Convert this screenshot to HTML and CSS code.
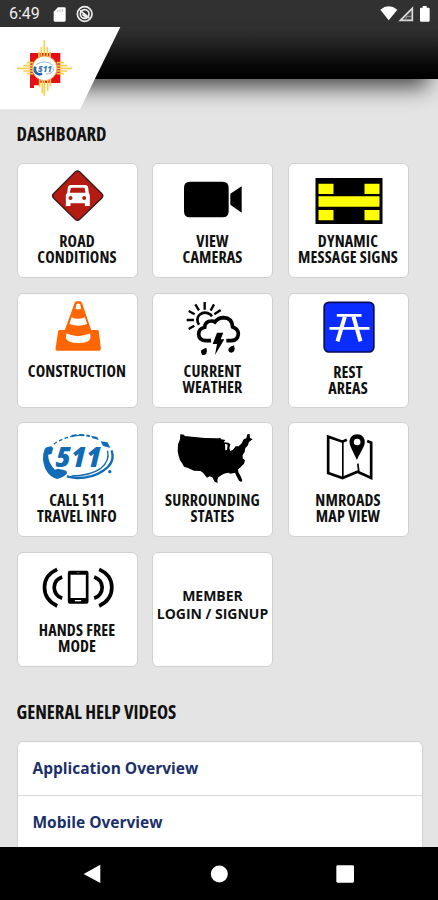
FILE: index.html
```html
<!DOCTYPE html>
<html lang="en">
<head>
  <meta charset="UTF-8">
  <meta name="viewport" content="width=device-width, initial-scale=1.0">
  <title>NMRoads</title>
  <link rel="stylesheet" href="styles.css">
</head>
<body>
  <div class="status-bar">
    <span class="time">6:49</span>
    <svg class="status-left" viewBox="150 0 140 78">
      <path d="M174 22h19q4 0 4 4v35q0 4-4 4h-28q-4 0-4-4V35z" fill="#fff"/>
      <path d="M173 31v6M180 28v8M187 27v9" stroke="#999" stroke-width="2"/>
      <circle cx="254" cy="42" r="22" fill="none" stroke="#eee" stroke-width="5"/>
      <circle cx="254" cy="42" r="13" fill="none" stroke="#eee" stroke-width="5"/>
      <path d="M240 31l28 23M247 43l12 10" stroke="#eee" stroke-width="5"/>
    </svg>
    <svg class="status-right" viewBox="1134 0 180 78">
      <path d="M1141 29q25-20 51 0l-26 32z" fill="#fff"/>
      <path d="M1201 61l36-36v36z" fill="#444" stroke="#ddd" stroke-width="5"/>
      <path d="M1218 61V49h17" fill="none" stroke="#999" stroke-width="3"/>
      <path d="M1268 18h12v5h6q3 0 3 3v36q0 3-3 3h-23q-3 0-3-3V26q0-3 3-3h5z" fill="#fff"/>
    </svg>
  </div>

  <header class="header">
    <div class="header-bar"></div>
    <svg class="logo" viewBox="0 78 363 252">
      <path d="M0 81h361L240 328H0z" fill="#fff"/>
      <path d="M90 159h91v90h-62v7h-17v8H90z" fill="#e31015"/>
      <g stroke="#f8cf4f" stroke-width="5">
        <path d="M133 121v166M51 205h165"/>
        <path d="M124 141v28M142 141v28M117 155v20M150 155v20"/>
        <path d="M127 240v40M143 240v32M119 238v24M151 238v20"/>
        <path d="M70 197h30M70 213h30M80 188h20M80 221h20"/>
        <path d="M170 197h32M170 213h32M170 188h22M170 221h22"/>
      </g>
      <circle cx="134" cy="205" r="37" fill="#fff" stroke="#f5a54a" stroke-width="3"/>
      <path d="M106 200q-4 9 2 18 8 8 18 3" fill="none" stroke="#1d63b5" stroke-width="8"/>
      <path d="M108 194q28-18 52 3M162 202q1 20-25 20" fill="none" stroke="#89afd8" stroke-width="2.5"/>
      <text class="logo-text" x="114" y="217" textLength="42" lengthAdjust="spacingAndGlyphs">511</text>
    </svg>
  </header>

  <main class="content">
    <h2 class="section-title">DASHBOARD</h2>
    <div class="tiles">
      <a class="tile">
        <svg class="icon" viewBox="22.5 27 357 207">
          <path d="M194 51q7-6 14 0l66 65q6 6 0 13l-66 64q-7 6-14 0l-65-64q-6-7 0-13z" fill="#b51b12" stroke="#351c1a" stroke-width="4"/>
          <path fill-rule="evenodd" fill="#fff" d="M179 90h45q8 0 9 8l2 15 3 7v33h-15v-8h-43v8h-14v-33l4-7 2-15q1-8 7-8zm2 8-3 15h47l-3-15z"/>
          <circle cx="180" cy="129" r="6" fill="#b51b12"/>
          <circle cx="221" cy="129" r="6" fill="#b51b12"/>
        </svg>
        <span class="label">ROAD<br>CONDITIONS</span>
      </a>
      <a class="tile">
        <svg class="icon" viewBox="24 27 357 207">
          <path d="M134 80h99q18 0 18 18v71q0 18-18 18h-99q-17 0-17-18V98q0-18 17-18z"/>
          <path d="M290 94v79l-34-24v-33z"/>
        </svg>
        <span class="label">VIEW<br>CAMERAS</span>
      </a>
      <a class="tile">
        <svg class="icon" viewBox="25.5 27 357 207">
          <path d="M105 69h201v138H105z"/>
          <path d="M114 86h45v31h-45zM252 86h45v31h-45zM114 124h183v31H114zM114 165h45v31h-45zM252 165h45v31h-45z" fill="#ff0"/>
        </svg>
        <span class="label">DYNAMIC<br>MESSAGE SIGNS</span>
      </a>
      <a class="tile">
        <svg class="icon" viewBox="22.5 26 357 207">
          <path d="M192 54q2-7 12-7 9 0 11 7l27 80h18q4 0 5 4l6 52q0 6-5 6H140q-5 0-5-6l8-52q1-4 5-4h15z" fill="#f60"/>
          <path d="M198 57q6-5 11 0l3 13q-9 4-17 0zM183 96q20 9 40 0l7 20q-27 11-53 0zM168 144q33 17 71 0l1 14q-3 15-36 15-34 0-38-15z" fill="#fff"/>
        </svg>
        <span class="label">CONSTRUCTION</span>
      </a>
      <a class="tile">
        <svg class="icon" viewBox="24 26 357 207">
          <g fill="none" stroke="#000">
            <path stroke-width="7" d="M179 50v23M151 57l11 18M207 57l-10 19M131 77l18 10M227 74l-19 13M125 104h22M131 131l17-10"/>
            <path stroke-width="8" d="M162 118q-11-17 2-30 15-12 33 0l4 5"/>
            <path stroke-width="11" d="M198 166h-17q-19-2-20-19 0-17 18-21 1-19 21-19 6 0 10 3 9-13 26-13 25 1 27 28 17 6 17 21-2 19-20 20h-16"/>
          </g>
          <path d="M216 142h19l-8 20h11l-28 47 6-33h-13zM184 187q4 12 0 18-6 6-13 3-6-6-2-13 5-5 15-8zM267 180q4 11 0 18-6 6-13 3-7-6-2-13 4-5 15-8z"/>
        </svg>
        <span class="label">CURRENT<br>WEATHER</span>
      </a>
      <a class="tile">
        <svg class="icon" viewBox="25.5 26 357 207">
          <rect x="131" y="51" width="149" height="149" rx="14" fill="#0b2cff" stroke="#080b55" stroke-width="5"/>
          <g fill="none" stroke="#fff">
            <path stroke-width="8" d="M169 90h74M147 129h120"/>
            <path stroke-width="12" d="M193 94l-22 74M219 94l21 74"/>
          </g>
        </svg>
        <span class="label label-low">REST<br>AREAS</span>
      </a>
      <a class="tile">
        <svg class="icon" viewBox="22.5 25 357 207">
          <g fill="#126bb5">
            <path d="M108 98l15-3 5 6-5 17-10 2q-1 22 20 45l10-3 24 6q5 5 1 11-11 11-28 14-23-6-35-29-14-33-2-62z"/>
            <path d="M242 63l18 4 5 9-19-5zM270 80l21 3 9 17-22-6z"/>
            <circle cx="298" cy="171" r="5"/>
          </g>
          <g fill="none" stroke="#126bb5">
            <path stroke-width="4" stroke-dasharray="11 7" d="M130 88q42-28 92-26"/>
            <path stroke-width="6" stroke-dasharray="14 8" d="M184 64q28-6 54 1"/>
            <path stroke-width="7" d="M303 107q13 36-25 61-32 22-78 22-18-1-31-5"/>
            <path stroke-width="4" d="M291 108q8 30-20 53-33 23-88 23"/>
          </g>
          <text class="call-text" x="134" y="158" textLength="136" lengthAdjust="spacingAndGlyphs">511</text>
        </svg>
        <span class="label">CALL 511<br>TRAVEL INFO</span>
      </a>
      <a class="tile">
        <svg class="icon" viewBox="24 25 357 207">
          <path d="M106 59l11 1 2 4 60 6 42 1 4-2 4 5 12 2-5 7 14 1 6 5-3 11 3 9 8-4 8-10h9l9-9 6-12 8-3 3-12 7-1 1 12 8 4-11 8-4 11-7 7-2 12-6 9 0 10 7 6-3 10-12 12-6 5 1 8 7 13 5 12-3 5-7-4-8-15-4-9-13 3-8-3-12 3-7 4-10 7-3 8 1 9-9-4-7-13-8-3-8 4-12-15-8-5-19-1-18-8-12-4-6-11-6-8-4-13-3-14 1-21 6-15z"/>
          <path d="M240 87l8 3-2 16-5 1z" fill="#fff"/>
        </svg>
        <span class="label">SURROUNDING<br>STATES</span>
      </a>
      <a class="tile">
        <svg class="icon" viewBox="430.5 25 357 207">
          <g fill="none" stroke="#000">
            <path stroke-width="8" d="M604 75l-13 6-43-15v109l43 15 45-19 41 19V84l-12-5"/>
            <path stroke-width="5" d="M592 82v107M637 147l3 24"/>
          </g>
          <path fill-rule="evenodd" d="M635 59c-14 0-23 10-23 23 0 12 12 30 22 54 11-24 24-41 24-54 0-13-9-23-23-23zm0 13a10 10 0 1 1 0 20 10 10 0 0 1 0-20z"/>
        </svg>
        <span class="label">NMROADS<br>MAP VIEW</span>
      </a>
      <a class="tile">
        <svg class="icon" viewBox="22.5 23 357 207">
          <path fill-rule="evenodd" d="M178 76h50q6 0 6 6v87q0 6-6 6h-50q-6 0-6-6V82q0-6 6-6zm2 12v70h46V88z"/>
          <path d="M193 166h19" stroke="#fff" stroke-width="4"/>
          <path d="M199 82h8" stroke="#888" stroke-width="2"/>
          <g fill="none" stroke="#000" stroke-width="11">
            <path d="M140 72q-38 17-38 54 0 38 38 56M155 95q-23 8-24 31 1 25 24 33"/>
            <path d="M266 72q38 17 38 54 0 38-38 56M251 95q23 8 24 31-1 25-24 33"/>
          </g>
        </svg>
        <span class="label">HANDS FREE<br>MODE</span>
      </a>
      <a class="tile tile-text">
        <span class="member">MEMBER<br>LOGIN / SIGNUP</span>
      </a>
    </div>

    <h2 class="section-title">GENERAL HELP VIDEOS</h2>
    <div class="video-list">
      <a class="video">Application Overview</a>
      <a class="video">Mobile Overview</a>
    </div>
  </main>

  <nav class="nav-bar">
    <svg class="nav-icons" viewBox="0 471 1314 159">
      <path d="M251 552l50-28v55z"/>
      <circle cx="658" cy="552" r="25.5"/>
      <rect x="1009" y="526" width="53" height="52" rx="4"/>
    </svg>
  </nav>
</body>
</html>
```
FILE: styles.css
```css
* {
  box-sizing: border-box;
}
body {
  margin: 0;
  height: 900px;
  display: flex;
  flex-direction: column;
  overflow: hidden;
  background-color: #e4e4e4;
  font-family: "Open Sans", "Noto Sans", sans-serif;
  color: #111;
}
.status-bar {
  flex: none;
  height: 26px;
  display: flex;
  align-items: center;
  background-color: #313131;
}
.time {
  width: 50px;
  padding: 2px 0 0 9px;
  font-family: Roboto, sans-serif;
  font-size: 16px;
  line-height: 24px;
  color: #eee;
}
.status-left {
  width: 46.7px;
  height: 26px;
}
.status-right {
  width: 60px;
  height: 26px;
  margin-left: auto;
}
.header {
  flex: none;
  position: relative;
  height: 84px;
}
.header-bar {
  height: 53px;
  background: linear-gradient(#313131, #2a2a2a 20%, #080808 75%, #000);
  box-shadow: -6px 12px 22px -4px rgba(0, 0, 0, 0.7);
}
/* slanted logo plate hangs below the bar */
.logo {
  position: absolute;
  left: 0;
  top: 0;
  width: 121px;
  height: 84px;
}
.logo-text {
  font-size: 26px;
  font-weight: 800;
  font-style: italic;
  fill: #3a78bd;
}
.content {
  flex: 1;
  min-height: 0;
  overflow: hidden;
  padding: 0 15px 0 16.5px;
}
.section-title {
  margin: 0;
  padding-top: 11px;
  height: 53px;
  font-size: 18.7px;
  line-height: 26px;
  font-weight: 700;
  font-stretch: 75%;
}
.tiles {
  display: grid;
  grid-template-columns: repeat(3, 121px);
  grid-auto-rows: 115px;
  gap: 14.6px 14.5px;
  margin-bottom: 21.4px;
}
.tile {
  display: flex;
  flex-direction: column;
  align-items: center;
  background-color: #fff;
  border: 1px solid #d0d0d0;
  border-radius: 6px;
}
.icon {
  flex: none;
  width: 119px;
  height: 69px;
}
.label {
  font-size: 16px;
  line-height: 16.3px;
  font-weight: 700;
  font-stretch: 75%;
  letter-spacing: 0.15px;
  text-align: center;
  white-space: nowrap;
}
.label-low {
  padding-top: 1px;
}
.call-text {
  font-size: 84px;
  font-weight: 800;
  font-stretch: 75%;
  font-style: italic;
  fill: #126bb5;
}
.tile-text {
  padding-top: 34px;
}
.member {
  font-size: 14px;
  line-height: 18.7px;
  font-weight: 700;
  text-align: center;
  white-space: nowrap;
}
.video-list {
  background-color: #fff;
  border: 1px solid #d0d0d0;
  border-radius: 6px 6px 0 0;
}
.video {
  display: block;
  height: 52.6px;
  padding-left: 15px;
  font-size: 15.5px;
  line-height: 52px;
  font-weight: 700;
  color: #1b2f68;
}
.video + .video {
  border-top: 1px solid #d8d8d8;
}
.nav-bar {
  flex: none;
  height: 53px;
  background-color: #000;
}
.nav-icons {
  display: block;
  width: 438px;
  height: 53px;
  fill: #fff;
}
```
